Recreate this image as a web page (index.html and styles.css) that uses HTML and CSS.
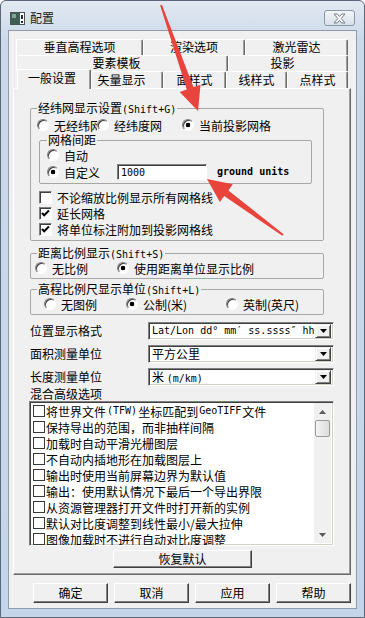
FILE: index.html
```html
<!DOCTYPE html>
<html lang="zh-CN">
<head>
    <meta charset="UTF-8">
    <meta name="viewport" content="width=device-width, initial-scale=1.0">
    <title>配置</title>
    <link rel="stylesheet" href="styles.css">
</head>
<body>
    <div class="window">
        <div class="titlebar">
            <svg class="app-icon" width="15" height="13" viewBox="0 0 15 13">
                <rect x="0.5" y="0.5" width="14" height="12" fill="#fff" stroke="#4a5550"/>
                <rect x="1" y="1" width="9" height="11" fill="#3d5f55"/>
                <rect x="2" y="2" width="4" height="4" fill="#7fa596"/>
                <rect x="11" y="3" width="2" height="4" fill="#2b2b2b"/>
                <rect x="11" y="9" width="2" height="2" fill="#2b2b2b"/>
            </svg>
            <span class="title">配置</span>
            <span class="close">
                <svg width="13" height="11" viewBox="0 0 13 11">
                    <path d="M1 1 H4.3 L6.5 3.6 L8.7 1 H12 L8.2 5.5 L12 10 H8.7 L6.5 7.4 L4.3 10 H1 L4.8 5.5 Z" fill="#fff" stroke="#6f7a88" stroke-width="1" stroke-linejoin="round"/>
                </svg>
            </span>
        </div>

        <div class="client">
            <div class="tabs">
                <div class="tab-row row1">
                    <div class="tab">垂直高程选项</div>
                    <div class="tab">渲染选项</div>
                    <div class="tab">激光雷达</div>
                </div>
                <div class="tab-row row2">
                    <div class="tab shift">要素模板</div>
                    <div class="tab shift">投影</div>
                </div>
                <div class="tab-row row3">
                    <div class="tab active">一般设置</div>
                    <div class="tab shift">矢量显示</div>
                    <div class="tab">面样式</div>
                    <div class="tab">线样式</div>
                    <div class="tab">点样式</div>
                </div>
            </div>

            <div class="panel">
                <fieldset class="group grid-group">
                    <legend>经纬网显示设置<span class="en">(Shift+G)</span></legend>
                    <div class="opt-row">
                        <label class="opt clip w60"><span class="radio"></span>无经纬网</label>
                        <label class="opt w85"><span class="radio"></span>经纬度网</label>
                        <label class="opt"><span class="radio on"></span>当前投影网格</label>
                    </div>
                    <fieldset class="group spacing-group">
                        <legend>网格间距</legend>
                        <label class="opt"><span class="radio"></span>自动</label>
                        <div class="opt-row custom-row">
                            <label class="opt w70"><span class="radio on"></span>自定义</label>
                            <span class="textbox en">1000</span>
                            <span class="unit en">ground units</span>
                        </div>
                    </fieldset>
                    <div class="checks">
                        <label class="opt"><span class="check"></span>不论缩放比例显示所有网格线</label>
                        <label class="opt"><span class="check"><svg width="11" height="11" viewBox="0 0 11 11"><path d="M2 5 L4.2 7.3 L9 2.5" fill="none" stroke="#000" stroke-width="2"/></svg></span>延长网格</label>
                        <label class="opt"><span class="check"><svg width="11" height="11" viewBox="0 0 11 11"><path d="M2 5 L4.2 7.3 L9 2.5" fill="none" stroke="#000" stroke-width="2"/></svg></span>将单位标注附加到投影网格线</label>
                    </div>
                </fieldset>

                <fieldset class="group scale-group">
                    <legend>距离比例显示<span class="en">(Shift+S)</span></legend>
                    <div class="opt-row">
                        <label class="opt w82"><span class="radio"></span>无比例</label>
                        <label class="opt"><span class="radio on"></span>使用距离单位显示比例</label>
                    </div>
                </fieldset>

                <fieldset class="group elev-group">
                    <legend>高程比例尺显示单位<span class="en">(Shift+L)</span></legend>
                    <div class="opt-row">
                        <label class="opt w82"><span class="radio"></span>无图例</label>
                        <label class="opt w100"><span class="radio on"></span>公制(米)</label>
                        <label class="opt"><span class="radio"></span>英制(英尺)</label>
                    </div>
                </fieldset>

                <div class="form-rows">
                    <span class="form-label">位置显示格式</span>
                    <div class="combo">
                        <span class="combo-text clip en">Lat/Lon dd°  mm′ ss.ssss″ hh</span>
                        <span class="combo-btn"><svg width="7" height="4" viewBox="0 0 7 4"><path d="M0 0 H7 L3.5 4 Z" fill="#000"/></svg></span>
                    </div>
                    <span class="form-label">面积测量单位</span>
                    <div class="combo">
                        <span class="combo-text">平方公里</span>
                        <span class="combo-btn"><svg width="7" height="4" viewBox="0 0 7 4"><path d="M0 0 H7 L3.5 4 Z" fill="#000"/></svg></span>
                    </div>
                    <span class="form-label">长度测量单位</span>
                    <div class="combo">
                        <span class="combo-text">米 <span class="en">(m/km)</span></span>
                        <span class="combo-btn"><svg width="7" height="4" viewBox="0 0 7 4"><path d="M0 0 H7 L3.5 4 Z" fill="#000"/></svg></span>
                    </div>
                </div>

                <div class="list-label">混合高级选项</div>
                <div class="listbox">
                    <div class="list-items">
                        <div class="list-item"><span class="box"></span>将世界文件 <span class="en">(TFW)</span>坐标匹配到<span class="en">GeoTIFF</span>文件</div>
                        <div class="list-item"><span class="box"></span>保持导出的范围，而非抽样间隔</div>
                        <div class="list-item"><span class="box"></span>加载时自动平滑光栅图层</div>
                        <div class="list-item"><span class="box"></span>不自动内插地形在加载图层上</div>
                        <div class="list-item"><span class="box"></span>输出时使用当前屏幕边界为默认值</div>
                        <div class="list-item"><span class="box"></span>输出：使用默认情况下最后一个导出界限</div>
                        <div class="list-item"><span class="box"></span>从资源管理器打开文件时打开新的实例</div>
                        <div class="list-item"><span class="box"></span>默认对比度调整到线性最小/最大拉伸</div>
                        <div class="list-item"><span class="box"></span>图像加载时不进行自动对比度调整</div>
                    </div>
                    <div class="scrollbar">
                        <span class="sb-arrow"><svg width="7" height="4" viewBox="0 0 7 4"><path d="M0 4 H7 L3.5 0 Z" fill="#5a5a5a"/></svg></span>
                        <span class="sb-thumb"></span>
                        <span class="sb-track"></span>
                        <span class="sb-arrow"><svg width="7" height="4" viewBox="0 0 7 4"><path d="M0 0 H7 L3.5 4 Z" fill="#5a5a5a"/></svg></span>
                    </div>
                </div>
                <button class="btn reset-btn">恢复默认</button>
            </div>

            <div class="buttons">
                <button class="btn">确定</button>
                <button class="btn">取消</button>
                <button class="btn">应用</button>
                <button class="btn">帮助</button>
            </div>
        </div>

        <svg class="marks" width="365" height="618" viewBox="0 0 365 618">
            <polygon points="160.1,5.3 186.8,89.5 179.7,91.9 198,111 200.5,84.7 193.4,87.1 161.9,4.7" fill="#e8443c"/>
            <polygon points="283.6,234.2 228.4,190.4 232.8,184.3 207,179 219.8,202.1 224.2,196 282.4,235.8" fill="#e8443c"/>
        </svg>
    </div>
</body>
</html>
```

FILE: styles.css
```css
* {
    box-sizing: border-box;
}
body {
    margin: 0;
    background: #fff;
    font-family: "Noto Sans CJK SC", sans-serif;
    font-size: 12px;
    color: #000;
}
.en {
    font-family: "DejaVu Sans Mono", "Liberation Mono", "Noto Sans CJK SC", monospace;
    font-size: 10px;
    line-height: 1;
}

/* window frame */
.window {
    position: relative;
    width: 365px;
    height: 618px;
    border: 1px solid #5b6879;
    border-radius: 6px 6px 0 0;
    background: linear-gradient(#e2e9f2, #cbd9ea 40px, #c5d5e9);
    padding: 0 7px 8px;
}
.titlebar {
    height: 29px;
    display: flex;
    align-items: flex-start;
}
.app-icon {
    margin: 11px 5px 0 2px;
}
.title {
    margin-top: 10px;
    line-height: 14px;
    color: #1a1a1a;
}
.close {
    margin: 9px 2px 0 auto;
    width: 31px;
    height: 16px;
    border: 1px solid #8a97a7;
    border-radius: 3px;
    background: linear-gradient(#f3f6fa, #d9e1eb);
    display: flex;
    align-items: center;
    justify-content: center;
}
.client {
    height: 579px;
    border: 1px solid #8e9bab;
    background: #f0f0f0;
    padding: 8px 5px 0 4px;
}

/* tabs */
.tabs {
    margin-left: 3px;
    width: 332px;
}
.tab-row {
    display: grid;
    height: 16px;
}
.row1 {
    grid-template-columns: 127px 102px 103px;
}
.row2 {
    grid-template-columns: 212px 120px;
}
.row3 {
    grid-template-columns: 74px 72px 63px 61px 61px;
    height: 17px;
    padding-left: 1px;
}
.tab {
    border-top: 1px solid #fff;
    border-left: 1px solid #fff;
    border-right: 1px solid #696969;
    border-radius: 2px 2px 0 0;
    box-shadow: inset -1px 0 #a0a0a0;
    background: #f0f0f0;
    text-align: center;
    line-height: 14px;
    white-space: nowrap;
}
.tab.shift {
    padding-right: 11px;
}
.row3 .tab {
    line-height: 15px;
}
.tab.active {
    position: relative;
    z-index: 1;
    margin: -2px 0 -1px 0;
    line-height: 16px;
    padding-right: 4px;
}

/* panel */
.panel {
    height: 487px;
    border: 1px solid;
    border-color: #fff #696969 #696969 #fff;
    box-shadow: inset -1px -1px #a0a0a0;
    padding: 12px 16px 0 16px;
}
.group {
    margin: 0;
    min-width: 0;
    width: 294px;
    border: 1px solid #a7a7a7;
    border-radius: 2px;
    padding: 0 0 2px 6px;
}
.group legend {
    height: 14px;
    padding: 0 1px;
    line-height: 14px;
}
.grid-group {
    padding: 2px 0 3px 6px;
}
.spacing-group {
    width: 273px;
    margin: 0 0 0 2px;
    padding: 0 0 3px 7px;
}
.scale-group {
    margin-top: 5px;
}
.elev-group {
    margin-top: 3px;
}
.opt-row {
    display: flex;
    align-items: center;
    height: 16px;
}
.custom-row {
    margin-top: 1px;
}
.opt {
    display: flex;
    align-items: center;
    height: 16px;
    white-space: nowrap;
}
.clip {
    overflow: hidden;
}
.w60 { width: 60px; }
.w70 { width: 70px; }
.w82 { width: 82px; }
.w85 { width: 85px; }
.w100 { width: 100px; }
.scale-group .opt-row {
    margin-left: -2px;
}
.elev-group .opt-row {
    margin-left: 7px;
}
.radio {
    flex: none;
    width: 12px;
    height: 12px;
    margin-right: 5px;
    border-radius: 50%;
    border: 1px solid;
    border-color: #808080 #fff #fff #808080;
    box-shadow: inset 1px 1px #404040;
    background: #fff;
}
.radio.on {
    background: radial-gradient(circle, #000 0 2px, #fff 2.6px);
}
.checks {
    margin-top: 5px;
}
.checks .opt {
    margin-left: 2px;
}
.check {
    flex: none;
    width: 13px;
    height: 13px;
    margin-right: 5px;
    border: 1px solid;
    border-color: #808080 #fff #fff #808080;
    box-shadow: inset 1px 1px #404040;
    background: #fff;
    display: flex;
    align-items: center;
    justify-content: center;
}
.textbox {
    width: 90px;
    height: 16px;
    border: 1px solid;
    border-color: #808080 #fff #fff #808080;
    box-shadow: inset 1px 1px #404040;
    background: #fff;
    padding: 3px 0 0 3px;
}
.unit {
    margin-left: 10px;
    font-weight: bold;
}

/* combos */
.form-rows {
    display: grid;
    grid-template-columns: 118px 186px;
    grid-auto-rows: 18px;
    row-gap: 5px;
    align-items: center;
    margin-top: 7px;
}
.form-label {
    line-height: 14px;
}
.combo {
    height: 18px;
    display: flex;
    align-items: center;
    border: 1px solid;
    border-color: #808080 #fff #fff #808080;
    box-shadow: inset 1px 1px #404040, inset -1px -1px #d4d0c8;
    background: #fff;
    padding: 1px 2px;
}
.combo-text {
    flex: 1;
    min-width: 0;
    white-space: nowrap;
    line-height: 14px;
    padding-left: 1px;
}
.combo-btn {
    flex: none;
    width: 16px;
    height: 14px;
    border: 1px solid;
    border-color: #f0f0f0 #404040 #404040 #f0f0f0;
    box-shadow: inset 1px 1px #fff, inset -1px -1px #808080;
    background: #f0f0f0;
    display: flex;
    align-items: center;
    justify-content: center;
}

/* list */
.list-label {
    margin-top: 1px;
    line-height: 14px;
    height: 14px;
}
.listbox {
    margin-left: -1px;
    width: 305px;
    height: 145px;
    display: flex;
    overflow: hidden;
    border: 1px solid;
    border-color: #808080 #fff #fff #808080;
    box-shadow: inset 1px 1px #404040, inset -1px -1px #d4d0c8;
    background: #fff;
    padding: 1px 2px 0;
}
.list-items {
    flex: 1;
    overflow: hidden;
}
.list-item {
    height: 16px;
    display: flex;
    align-items: center;
    white-space: nowrap;
}
.list-item .en {
    margin: 0 1px;
}
.box {
    flex: none;
    width: 12px;
    height: 12px;
    margin: 0 1px;
    border: 1px solid #3a3a3a;
    background: #fff;
}
.scrollbar {
    flex: none;
    width: 17px;
    margin-bottom: 2px;
    display: flex;
    flex-direction: column;
    background: #f0f0f0;
}
.sb-arrow {
    height: 17px;
    display: flex;
    align-items: center;
    justify-content: center;
}
.sb-thumb {
    height: 17px;
    margin: 0 1px;
    border: 1px solid #9a9a9a;
    border-radius: 2px;
    background: linear-gradient(90deg, #f4f4f4, #dcdcdc);
}
.sb-track {
    flex: 1;
}

/* buttons */
.btn {
    font: inherit;
    color: #000;
    padding: 0;
    height: 20px;
    width: 75px;
    border: 1px solid;
    border-color: #fff #404040 #404040 #fff;
    box-shadow: inset -1px -1px #808080;
    background: #f0f0f0;
    line-height: 16px;
}
.reset-btn {
    display: block;
    width: 139px;
    height: 18px;
    margin: 4px 0 0 83px;
}
.buttons {
    display: flex;
    gap: 6px;
    margin: 8px 0 0 20px;
}

/* red annotation arrows */
.marks {
    position: absolute;
    left: -1px;
    top: -1px;
    pointer-events: none;
}
```
